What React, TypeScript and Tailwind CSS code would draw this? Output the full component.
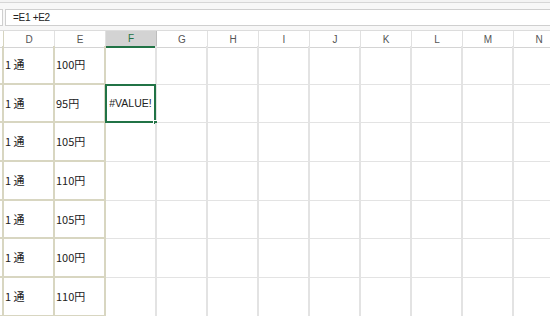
import React from 'react';

const columns = ['D', 'E', 'F', 'G', 'H', 'I', 'J', 'K', 'L', 'M', 'N'];

const rows: { qty: string; price: string }[] = [
  { qty: '1 通', price: '100円' },
  { qty: '1 通', price: '95円' },
  { qty: '1 通', price: '105円' },
  { qty: '1 通', price: '110円' },
  { qty: '1 通', price: '105円' },
  { qty: '1 通', price: '100円' },
  { qty: '1 通', price: '110円' },
];

const cellFont = "font-['Noto_Sans_CJK_JP',sans-serif] text-[11px] text-[#222]";

export default function App() {
  return (
    <div className="w-[550px] h-[316px] overflow-hidden bg-white font-['Liberation_Sans',sans-serif]">
      {/* ribbon edge */}
      <div className="h-[3px] bg-[#f3f3f3] border-b border-[#d6d6d6]" />

      {/* formula bar */}
      <div className="h-[28px] flex items-start pt-[6px] gap-[2px] bg-[#f7f7f7] border-b border-[#dcdcdc]">
        <div className="w-[3px] h-[17px] bg-white border border-l-0 border-[#cfcfcf]" />
        <div className="flex-1 h-[17px] bg-white border border-r-0 border-[#cfcfcf] flex items-center pl-[7px] text-[10px] text-[#222] tracking-[-0.3px]">
          =E1 +E2
        </div>
      </div>

      {/* column headers */}
      <div className="grid grid-cols-[4px_repeat(11,51px)] h-[15px] bg-white">
        <div className="border-r border-[#d6d4bf] border-b border-b-[#d4d4d4]" />
        {columns.map((c) => (
          <div
            key={c}
            className={
              c === 'F'
                ? 'flex items-center justify-center bg-[#d3d3d3] border-r border-[#bdbdbd] border-b-2 border-b-[#217346] text-[10px] text-[#217346]'
                : 'flex items-center justify-center border-r border-[#e1e1e1] border-b border-b-[#d4d4d4] text-[10px] text-[#555]'
            }
          >
            {c}
          </div>
        ))}
      </div>

      {/* sheet body */}
      <div className="grid grid-cols-[4px_repeat(11,51px)] auto-rows-[38.67px]">
        {rows.map((r, i) => (
          <React.Fragment key={i}>
            <div className="border-r-2 border-b-2 border-[#d8d6c1]" />
            <div className={`border-r-2 border-b-2 border-[#d8d6c1] flex items-center pl-[1px] ${cellFont}`}>
              {r.qty}
            </div>
            <div className={`border-r-2 border-b-2 border-[#d8d6c1] flex items-center pl-[1px] ${cellFont}`}>
              {r.price}
            </div>
            {columns.slice(2).map((c) => (
              <div
                key={c}
                className={`relative border-r-2 border-b border-[#e3e3e3] ${cellFont} flex items-center justify-center`}
              >
                {c === 'F' && i === 1 && (
                  <>
                    <span className="font-['Liberation_Sans',sans-serif] text-[10.5px] overflow-hidden whitespace-nowrap">#VALUE!</span>
                    <div className="absolute -left-[1px] -top-[1px] -right-[1px] bottom-[-1px] border-2 border-[#217346]" />
                    <div className="absolute -right-[3px] -bottom-[3px] w-[5px] h-[5px] bg-[#217346] border border-white" />
                  </>
                )}
              </div>
            ))}
          </React.Fragment>
        ))}
      </div>
    </div>
  );
}
